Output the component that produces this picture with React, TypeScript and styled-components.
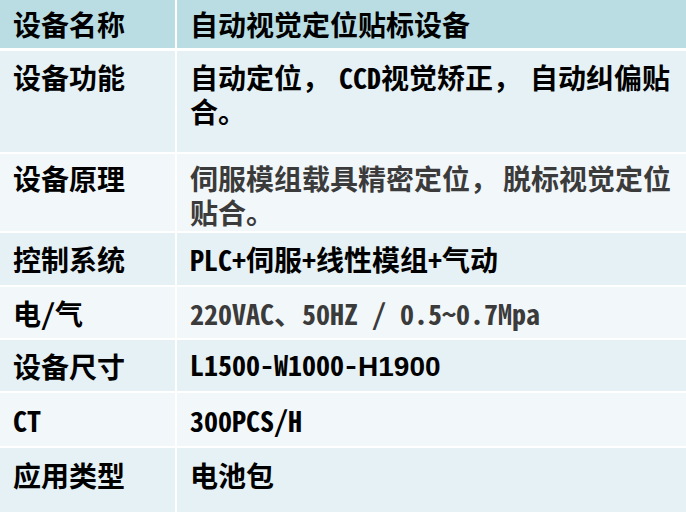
import { FunctionComponent } from "react";
import styled, { createGlobalStyle } from "styled-components";

const GlobalStyle = createGlobalStyle`
  html, body {
    margin: 0;
    padding: 0;
    background: #ffffff;
  }
  body {
    font-family: "Noto Sans Mono CJK SC", "Noto Sans CJK SC", sans-serif;
  }
`;

const Table = styled.div`
  display: flex;
  flex-direction: column;
  gap: 2px;
  width: 686px;
  height: 512px;
  overflow: hidden;
  background: #ffffff;
`;

type Tone = "head" | "dark" | "light";

const colors: Record<Tone, string> = {
  head: "#b9dde3",
  dark: "#e5f1f4",
  light: "#f2f7fa",
};

const Row = styled.div<{ $h: number; $head?: boolean }>`
  display: grid;
  grid-template-columns: 175px 1fr;
  gap: 2px;
  flex: 0 0 auto;
  height: ${({ $h }) => $h}px;
  margin-bottom: ${({ $head }) => ($head ? "1px" : "0")};
`;

// $top: when set, text sits at the top with this padding instead of centred
const Cell = styled.div<{ $tone: Tone; $muted?: boolean; $top?: number }>`
  display: flex;
  align-items: ${({ $top }) => ($top ? "flex-start" : "center")};
  padding: ${({ $top }) => ($top ? `${$top}px` : "0")} 8px 0 13px;
  background: ${({ $tone }) => colors[$tone]};
  color: ${({ $muted }) => ($muted ? "#3b3b3b" : "#000000")};
  font-family: "Noto Sans Mono CJK SC", "Noto Sans CJK SC", sans-serif;
  font-weight: 700;
  font-size: 28px;
  line-height: 34px;
`;

const Narrow = styled.span`
  font-family: "Liberation Sans Narrow", "Liberation Sans", sans-serif;
  font-weight: 700;
  font-size: 28px;
`;

// full-width comma with a little extra room after it (justified line in the source)
const Comma = styled.span<{ $gap: number }>`
  margin-right: ${({ $gap }) => $gap}px;
`;

type Item = {
  label: string;
  value: React.ReactNode;
  h: number;
  tone: Tone;
  muted?: boolean;
  top?: number;
};

const items: Item[] = [
  {
    label: "设备功能",
    value: (
      <>
        自动定位<Comma $gap={9}>，</Comma>CCD视觉矫正<Comma $gap={9}>，</Comma>自动纠偏贴合。
      </>
    ),
    h: 101,
    tone: "dark",
    top: 9,
  },
  {
    label: "设备原理",
    value: (
      <>
        伺服模组载具精密定位<Comma $gap={5}>，</Comma>脱标视觉定位贴合。
      </>
    ),
    h: 77,
    tone: "light",
    muted: true,
    top: 7,
  },
  { label: "控制系统", value: "PLC+伺服+线性模组+气动", h: 52, tone: "dark" },
  { label: "电/气", value: "220VAC、50HZ / 0.5~0.7Mpa", h: 51, tone: "light", muted: true },
  {
    label: "设备尺寸",
    value: (
      <>
        L1500-W1000-<Narrow>H1900</Narrow>
      </>
    ),
    h: 51,
    tone: "dark",
  },
  { label: "CT", value: "300PCS/H", h: 53, tone: "light" },
  { label: "应用类型", value: "电池包", h: 64, tone: "dark", top: 10 },
];

const App: FunctionComponent = () => (
  <>
    <GlobalStyle />
    <Table>
      <Row $h={48} $head>
        <Cell $tone="head">设备名称</Cell>
        <Cell $tone="head">自动视觉定位贴标设备</Cell>
      </Row>
      {items.map((it) => (
        <Row key={it.label} $h={it.h}>
          <Cell $tone={it.tone} $top={it.top}>
            {it.label}
          </Cell>
          <Cell $tone={it.tone} $muted={it.muted} $top={it.top}>
            <span>{it.value}</span>
          </Cell>
        </Row>
      ))}
    </Table>
  </>
);

export default App;
